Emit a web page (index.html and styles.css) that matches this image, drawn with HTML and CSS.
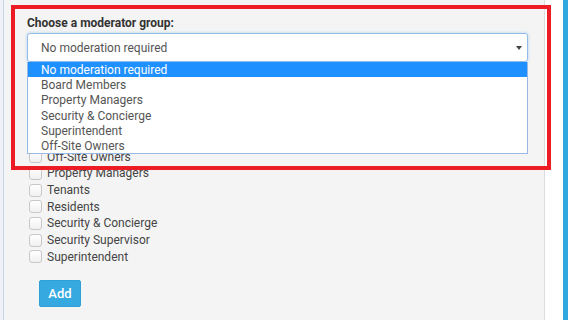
FILE: index.html
```html
<!DOCTYPE html>
<html lang="en">
<head>
    <meta charset="UTF-8">
    <title>Moderator group</title>
    <link rel="stylesheet" href="styles.css">
</head>
<body>
    <div class="gutter"></div>
    <div class="panel">
        <div class="field-label">Choose a moderator group:</div>
        <div class="select">
            <span>No moderation required</span>
            <span class="caret"></span>
        </div>
        <div class="checks">
            <label class="check"><span class="box"></span>Off-Site Owners</label>
            <label class="check"><span class="box"></span>Property Managers</label>
            <label class="check"><span class="box"></span>Tenants</label>
            <label class="check"><span class="box"></span>Residents</label>
            <label class="check"><span class="box"></span>Security &amp; Concierge</label>
            <label class="check"><span class="box"></span>Security Supervisor</label>
            <label class="check"><span class="box"></span>Superintendent</label>
        </div>
        <button class="btn-add">Add</button>
    </div>
    <div class="spacer"></div>
    <div class="side-bar"></div>

    <!-- open select popup -->
    <ul class="dropdown">
        <li class="active">No moderation required</li>
        <li>Board Members</li>
        <li>Property Managers</li>
        <li>Security &amp; Concierge</li>
        <li>Superintendent</li>
        <li>Off-Site Owners</li>
    </ul>

    <!-- highlight frame -->
    <div class="highlight"></div>
</body>
</html>
```

FILE: styles.css
```css
* {
    margin: 0;
    padding: 0;
    box-sizing: border-box;
}

body {
    font-family: Roboto, 'Liberation Sans', sans-serif;
    font-size: 12px;
    color: #444;
    width: 568px;
    height: 320px;
    overflow: hidden;
    position: relative;
    display: flex;
    background: #fff;
}

.gutter {
    width: 3px;
    background: #eef2f7;
}

.panel {
    width: 542px;
    background: #f4f4f4;
    border-left: 1px solid #c9d6e6;
    border-right: 1px solid #dedede;
    padding: 14px 15px 0 23px;
}

.field-label {
    font-weight: bold;
    color: #333;
    line-height: 19px;
}

.select {
    width: 501px;
    height: 29px;
    background: #fff;
    border: 1px solid #93bde9;
    border-radius: 3px;
    box-shadow: 0 0 3px rgba(102, 175, 233, 0.5);
    display: flex;
    align-items: center;
    justify-content: space-between;
    padding: 0 5px 0 13px;
    color: #555;
}

.caret {
    width: 0;
    height: 0;
    border-left: 3px solid transparent;
    border-right: 3px solid transparent;
    border-top: 4px solid #444;
}

.checks {
    margin-top: 86.5px;
}

.check {
    display: flex;
    align-items: center;
    height: 16.67px;
    gap: 5px;
    padding-left: 2px;
    color: #444;
}

.box {
    width: 13px;
    height: 13px;
    border: 1px solid #c8c8c8;
    border-radius: 3px;
    background: linear-gradient(#fff, #f0f0f0);
}

.btn-add {
    margin: 15px 0 0 12px;
    width: 42px;
    height: 27px;
    background: #36a9e1;
    border: 1px solid #2fa0d6;
    border-radius: 2px;
    color: #fff;
    font-family: Roboto, 'Liberation Sans', sans-serif;
    font-size: 13px;
    font-weight: 500;
}

.spacer {
    width: 18px;
}

.side-bar {
    width: 5px;
    background: #2ea8df;
}

.dropdown {
    position: absolute;
    left: 27px;
    top: 62px;
    width: 501px;
    list-style: none;
    background: #fff;
    border: 1px solid #98b9e4;
    border-top: none;
    color: #555;
}

.dropdown li {
    height: 15.2px;
    line-height: 16.5px;
    padding-left: 13px;
}

.dropdown li.active {
    background: #1e90ff;
    color: #fff;
}

.highlight {
    position: absolute;
    left: 11px;
    top: 5px;
    width: 540px;
    height: 165px;
    border: 4px solid #ed1c24;
}
```
